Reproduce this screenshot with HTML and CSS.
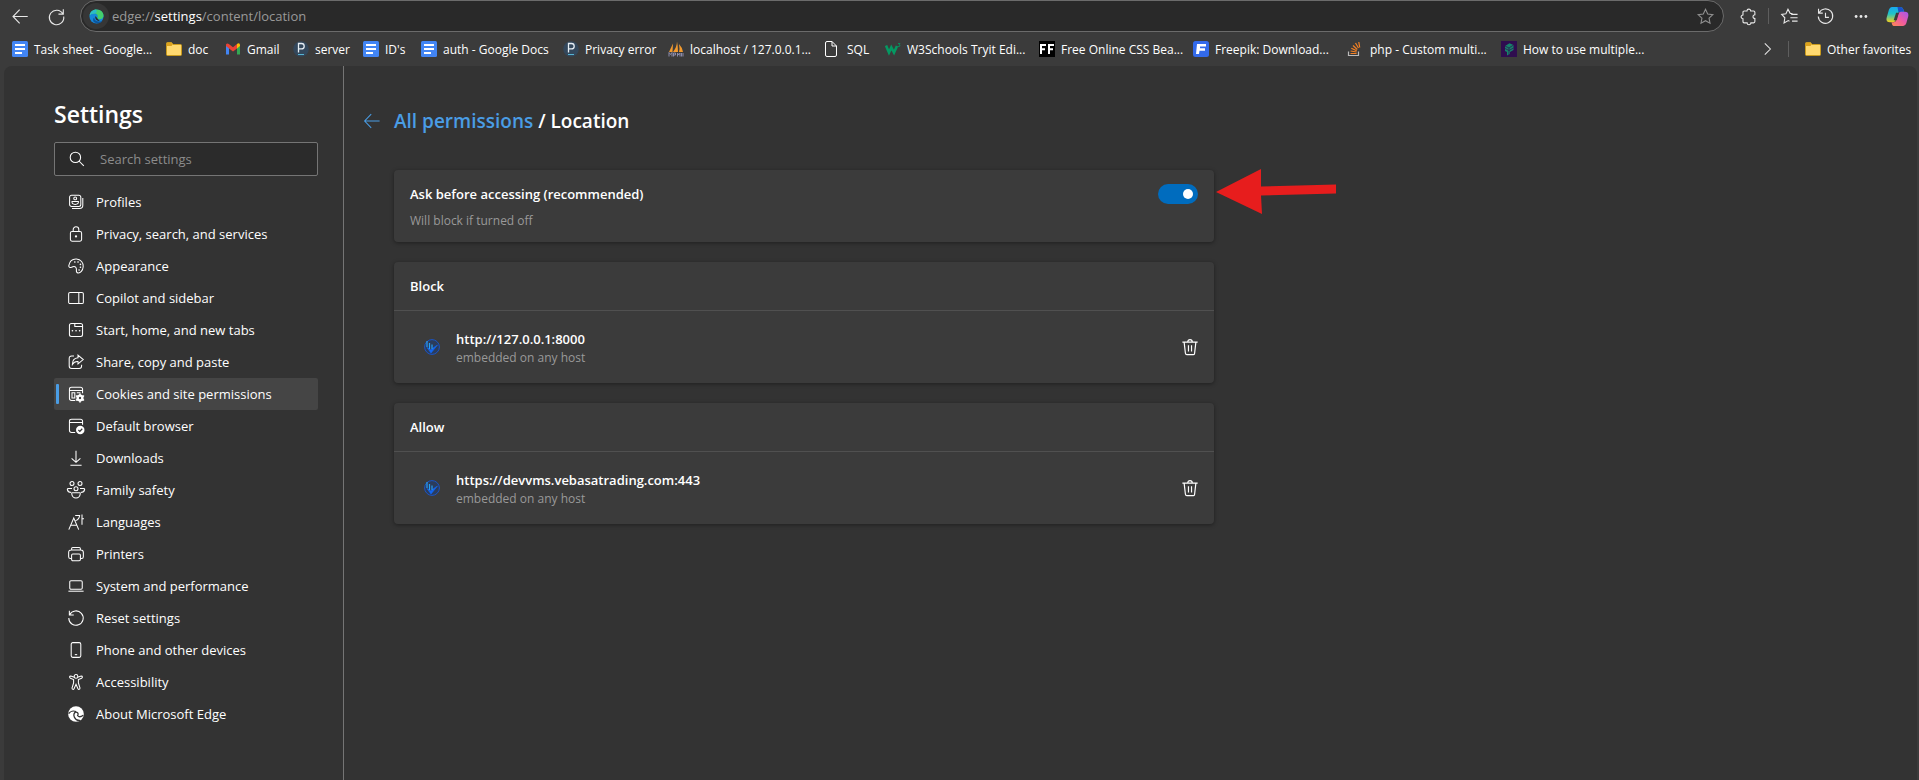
FILE: index.html
```
<!DOCTYPE html>
<html lang="en">
<head>
  <meta charset="utf-8">
  <title>Settings</title>
  <link rel="stylesheet" href="styles.css">
</head>
<body>
  <!-- shared icons -->
  <svg class="sprite" aria-hidden="true">
    <symbol id="docs" viewBox="0 0 16 16">
      <rect width="16" height="16" rx="1.5" fill="#4285f4"/>
      <path d="M3 4h10M3 8h10M3 12h7" stroke="#fff" stroke-width="2"/>
    </symbol>
    <symbol id="folder" viewBox="0 0 16 16">
      <path d="M.5 2.5q0-1 1-1h4l1.5 2h7.5q1 0 1 1v9q0 1-1 1h-13q-1 0-1-1z" fill="#ffd970" stroke="#c99a1c"/>
      <path d="M1 2h4.500l1.200 1.500L5.500 5H1z" fill="#dca11d"/>
    </symbol>
    <symbol id="pga" viewBox="0 0 16 16">
      <circle cx="8" cy="8" r="7.800" fill="#33475b"/>
      <path d="M5.500 11.500v-9h3a2.700 2.700 0 0 1 0 5.400h-3" fill="none" stroke="#e6edf3" stroke-width="1.300"/>
      <path d="M5 13.500h6" stroke="#56b4d3"/>
    </symbol>
    <symbol id="site" viewBox="0 0 16 16">
      <circle cx="8" cy="8" r="7.400" fill="#2b3c5c" stroke="#1c55c4"/>
      <path d="M3 8.500l4 5.500 6.500-8-4.500 3-2 2z" fill="#1266f1" stroke="#1266f1" stroke-width=".6"/>
      <path d="M3 2v6M5.500 4v6M8 5.500v4.500" stroke="#27a0f5" stroke-width="1.200"/>
    </symbol>
    <symbol id="trash" viewBox="0 0 20 20">
      <path d="M1.500 4.500h17M7.500 4.300a2.500 2.500 0 0 1 5 0M3.500 4.800l1.400 12.200q.2 1.500 1.600 1.500h7q1.400 0 1.600-1.500l1.400-12.200M8.300 8v7M11.700 8v7"/>
    </symbol>
  </svg>

  <header class="browser">
    <div class="toolbar">
      <button class="tool-btn" title="Back"><svg class="icon" viewBox="0 0 20 20"><path d="M18.500 10h-17M9 2l-7.800 8L9 18"/></svg></button>
      <button class="tool-btn" title="Refresh"><svg class="icon" viewBox="0 0 20 20"><path d="M17.500 7A8.500 8.500 0 1 0 18.500 10M18 1.500v5.700h-5.700"/></svg></button>
      <div class="address">
        <span class="edge-badge">
          <svg class="edge-logo" viewBox="0 0 16 16">
            <circle cx="8" cy="8" r="7.500" fill="#1687d9"/>
            <path d="M.7 7C1.200 3 4 .5 8 .5c4.500 0 7.500 3 7.500 6.500 0 2.500-1.700 4-4 4-2 0-3-.8-2.500-1.800C10 7 8.500 4.800 5.700 4.800 3.300 4.800 1.500 5.800.7 7z" fill="#43cf6d"/>
            <path d="M.7 7C1 3.500 3.500 1.200 7 .6c2 1.500 1.500 3.500-.5 4.200C3.800 4.500 1.700 5.500.7 7z" fill="#2bbcc8"/>
            <path d="M5.500 9c0 3 3 5 6.500 4.300l2.300-.9C12.500 15.500 8.500 16 6 14.500 3.800 13 4 10.300 5.500 9z" fill="#0b559e"/>
            <path d="M7 7.500q-1 2 .4 3.800 1.600 1.800 4 1.400L9 10z" fill="#292929"/>
          </svg>
        </span>
        <span class="url">edge://<b>settings</b>/content/location</span>
        <button class="tool-btn star" title="Add to favorites"><svg class="icon" viewBox="0 0 20 20"><path d="M10 1.500l2.600 5.500 6 .8-4.400 4.100 1.100 6L10 15l-5.300 2.900 1.100-6L1.400 7.800l6-.8z"/></svg></button>
      </div>
      <button class="tool-btn" title="Extensions"><svg class="icon" viewBox="0 0 20 20"><path d="M5 3.500h3.200a2.200 2.200 0 1 1 4.400 0H16q1.500 0 1.500 1.500v3a2.200 2.200 0 1 0 0 4.400V16q0 1.500-1.500 1.500h-3.200a2.200 2.200 0 0 1-4.400 0H5q-1.500 0-1.500-1.500v-3.400a2.200 2.200 0 1 1 0-4.400V5q0-1.500 1.500-1.500z"/></svg></button>
      <span class="separator"></span>
      <button class="tool-btn" title="Favorites"><svg class="icon" viewBox="0 0 20 20"><path d="M13.500 6.500l-2.700-.2L8.200 1.500 5.800 6.700.8 7.500l3.700 4-.9 6 4.900-2.700 1.500.8M12 7.500h7.500M11 11.500h8.500M13 15.500h6.500"/></svg></button>
      <button class="tool-btn" title="History"><svg class="icon" viewBox="0 0 20 20"><path d="M2.500 5.500A8.500 8.500 0 1 1 1.500 10M1.800 1v5h5M10 5.500V11h4"/></svg></button>
      <button class="tool-btn" title="More"><svg class="icon dots" viewBox="0 0 20 20"><circle cx="3" cy="10" r="2"/><circle cx="10" cy="10" r="2"/><circle cx="17" cy="10" r="2"/></svg></button>
      <button class="tool-btn copilot" title="Copilot">
        <svg viewBox="0 0 24 22">
          <defs>
            <linearGradient id="cool" x1="0" y1="0" x2="0" y2="1"><stop offset="0" stop-color="#18a8ef"/><stop offset=".45" stop-color="#20c3c8"/><stop offset="1" stop-color="#f3d01b"/></linearGradient>
            <linearGradient id="warm" x1="1" y1="0" x2="0" y2="1"><stop offset="0" stop-color="#a258f0"/><stop offset=".5" stop-color="#ef5aa2"/><stop offset="1" stop-color="#ff8b4d"/></linearGradient>
          </defs>
          <path d="M6 1h9q2.500 0 3.300 2.800L19 6h-4q-2 0-2.700 2l-2.300 7q-.6 2-2.600 2H4Q-1 17 1 11L3 4q1-3 3-3z" fill="url(#cool)"/>
          <path d="M12 1h3q2.500 0 3.300 2.800L19 6h-4l-2 .5z" fill="#1b50c8"/>
          <path d="M18 21H9q-2.500 0-3-3l-.3-1H8q2 0 2.600-2L13 8q.7-2 2.700-2h4q4.500 0 3.500 5l-2 7q-1 3-3.200 3z" fill="url(#warm)"/>
          <path d="M10.500 7h3l-2.300 8H8z" fill="#3b3b3b"/>
        </svg>
      </button>
    </div>

    <nav class="bookmarks" aria-label="Favorites bar">
      <a href="#"><svg><use href="#docs"/></svg>Task sheet - Google...</a>
      <a href="#"><svg><use href="#folder"/></svg>doc</a>
      <a href="#"><svg viewBox="0 0 16 16"><path d="M1 13.500V4l3 2.200v7.300z" fill="#4285f4"/><path d="M12 13.500V6.200L15 4v9.500z" fill="#34a853"/><path d="M1 5V3.500Q2 1.800 3.800 3L8 6.200 12 3v4.500l-4 3-4-3z" fill="#ea4335"/><path d="M12 3q2-1.500 3 .5V5l-3 2.500z" fill="#fbbc04"/></svg>Gmail</a>
      <a href="#"><svg><use href="#pga"/></svg>server</a>
      <a href="#"><svg><use href="#docs"/></svg>ID's</a>
      <a href="#"><svg><use href="#docs"/></svg>auth - Google Docs</a>
      <a href="#"><svg><use href="#pga"/></svg>Privacy error</a>
      <a href="#"><svg viewBox="0 0 16 16"><path d="M5 2.500L1 11h3.500zM9 .5Q9 6 5 11h5q0-6-1-10.500zM11 3q1 5 0 8h4q-1-5-4-8z" fill="#f29a2e"/><path d="M1 15.500v-4l1.500 2L4 11.500v4M5.500 15.500v-3.500h2v2h-2M9.500 15.500v-3.500l1.200 2 1.300-2v3.500M13.500 12v3.500M15 12v3.500" fill="none" stroke="#8c8cab"/></svg>localhost / 127.0.0.1...</a>
      <a href="#" class="wide"><svg viewBox="0 0 16 16"><path d="M2.500 2q0-1.500 1.500-1.500h5L13.500 5v9q0 1.500-1.500 1.500H4q-1.500 0-1.500-1.500zM9 .5V5h4.500" fill="none" stroke="#fff"/></svg>SQL</a>
      <a href="#"><svg viewBox="0 0 16 16"><path d="M1 4.500l3 7 2.300-5 2.700 5 3-6.500" fill="none" stroke="#059862" stroke-width="2.600"/><path d="M13 2.500h2l-1 1.300q1.500.2.900 1.300-.7.900-2 .3" fill="none" stroke="#059862" stroke-width=".8"/></svg>W3Schools Tryit Edi...</a>
      <a href="#"><svg viewBox="0 0 16 16"><path d="M0 0h16v16H0z"/><path d="M2 13V4h5M2 8.200h4M10 13V4h5M10 8.200h4" fill="none" stroke="#fff" stroke-width="2"/></svg>Free Online CSS Bea...</a>
      <a href="#"><svg viewBox="0 0 16 16"><rect width="16" height="16" rx="2.500" fill="#336aea"/><path d="M4 3h9v2.500H7v1.800h5v2.500H6.500L6 13H3z" fill="#fff"/></svg>Freepik: Download...</a>
      <a href="#" class="wide"><svg viewBox="0 0 16 16"><path d="M2.500 10.500v4h10v-4" fill="none" stroke="#bcbbbb" stroke-width="1.200"/><path d="M4.500 12.500h6M4.600 10l6 1M5.300 7.300l5.400 2.500M7 4.500l4.300 4M9.500 2l3 5M12.800 1l.9 5.500" stroke="#f48024" stroke-width="1.200"/></svg>php - Custom multi...</a>
      <a href="#"><svg viewBox="0 0 16 16"><path d="M0 0h16v16H0z" fill="#2f0d4f"/><path d="M4 5l4.500-2.800L12.500 4v5L9 11v2l-3 1.500V11l-2-1z" fill="#16836a"/><path d="M4 5l4 2 4.500-3M4 7.500l4 2L12.500 7M8 7v7" fill="none" stroke="#2f0d4f" stroke-width=".7"/></svg>How to use multiple...</a>
      <button class="tool-btn overflow" title="More favorites"><svg class="icon" viewBox="0 0 20 20"><path d="M6 3l7 7-7 7"/></svg></button>
      <span class="separator"></span>
      <a href="#"><svg><use href="#folder"/></svg>Other favorites</a>
    </nav>
  </header>

  <div class="page">
    <aside class="sidebar">
      <h1>Settings</h1>
      <label class="search">
        <svg class="icon" viewBox="0 0 20 20"><circle cx="8" cy="8" r="6.500"/><path d="M12.500 12.500l6 6"/></svg>
        <input type="search" placeholder="Search settings" aria-label="Search settings">
      </label>
      <nav class="menu">
        <a href="#"><svg class="icon" viewBox="0 0 20 20"><rect x="2" y="1.500" width="14" height="14" rx="2.500"/><circle cx="9" cy="5.500" r="1.800"/><path d="M5 9.500h8q.3 3.500-4 3.500T5 9.500zM18.500 5v9q0 4-4 4H5"/></svg>Profiles</a>
        <a href="#"><svg class="icon" viewBox="0 0 20 20"><rect x="3" y="7" width="14" height="12" rx="2"/><path d="M6.500 7V4.500a3.500 3.500 0 0 1 7 0V7"/><circle cx="10" cy="13" r=".8"/></svg>Privacy, search, and services</a>
        <a href="#"><svg class="icon" viewBox="0 0 20 20"><path d="M1 9.500C2 4 6 1 10.500 1.200 16 1.500 19.500 6 19 11c-.5 5-3.500 8-6.500 7.700-3-.5-1.800-3.500-2-5.200C10 11 8 10.200 6 11c-2.500 1.500-5.500 1-5-1.500z"/><path d="M8.500 5h.1M12.500 5h.1M15.500 8h.1M15.500 11.500h.1M13.800 15h.1" class="dab"/></svg>Appearance</a>
        <a href="#"><svg class="icon" viewBox="0 0 20 20"><rect x=".8" y="3" width="18.400" height="14" rx="1.800"/><path d="M13.500 3v14"/></svg>Copilot and sidebar</a>
        <a href="#"><svg class="icon" viewBox="0 0 20 20"><rect x="1.800" y="1.800" width="16.400" height="16.400" rx="2.500"/><path d="M8.500 2v3.500H18"/><path d="M5.500 11h.1M10 11h.1M14.500 11h.1" class="dab"/></svg>Start, home, and new tabs</a>
        <a href="#"><svg class="icon" viewBox="0 0 20 20"><path d="M7.500 2.500h-3q-3 0-3 3V15q0 3 3 3H14q3 0 3-3v-1.500"/><path d="M12.500 1.500L19 7l-6.500 5.500V9.500Q8 9 5.500 13 5.500 5.500 12.500 4.800z"/></svg>Share, copy and paste</a>
        <a href="#" class="active"><svg class="icon" viewBox="0 0 20 20"><path d="M9 18H4.500q-2.700 0-2.700-2.700V4Q1.800 1.500 4.500 1.500h11q2.700 0 2.700 2.500v5M2 5.500h16M5 8.500h3.500V15H5zM11 8.500h4.500"/><circle cx="15" cy="15" r="3" class="gear"/><path d="M15 10v2M15 18v2M10.700 12.500l1.700 1M17.600 16.500l1.700 1M10.700 17.500l1.700-1M17.600 13.500l1.700-1" class="dab"/></svg>Cookies and site permissions</a>
        <a href="#"><svg class="icon" viewBox="0 0 20 20"><path d="M9 18H4.500q-2.700 0-2.700-2.700V4Q1.800 1.500 4.500 1.500h11q2.700 0 2.700 2.500v4.500M2 5.500h16"/><circle cx="15.300" cy="15" r="5.300" class="solid"/><path d="M13 15l1.800 1.800 3-3.300" class="cut"/></svg>Default browser</a>
        <a href="#"><svg class="icon" viewBox="0 0 20 20"><path d="M10 1v14.500M4.500 10.500l5.500 5 5.500-5M3 19h14"/></svg>Downloads</a>
        <a href="#"><svg class="icon" viewBox="0 0 20 20"><circle cx="5" cy="2" r="2.500"/><circle cx="15" cy="2" r="2.500"/><circle cx="10" cy="8.500" r="2.500"/><path d="M4 13.200Q-.2 13-.8 9.500q0-1.500 1.500-1.500H5M16 13.200q4.200-.2 4.800-3.700 0-1.500-1.500-1.500H15M5.500 13.500h9q1 0 .8 1.500-.8 5-5.300 5t-5.300-5q-.2-1.500.8-1.500z"/></svg>Family safety</a>
        <a href="#"><svg class="icon" viewBox="0 0 20 20"><path d="M1 19.500L7.200 5l6.200 14.500M3.300 14h7.800M9 1.800h5.500q-.2 4.500-5 6.500M17.500.5v13M17.500 6h2.500"/></svg>Languages</a>
        <a href="#"><svg class="icon" viewBox="0 0 20 20"><path d="M4.500 15.500H3q-2.200 0-2.200-2.200V8Q.8 5 4 5h12q3.200 0 3.200 3v5.300q0 2.200-2.200 2.200h-1.500M4.500 5V3.500Q4.500 2 6 2h8q1.500 0 1.500 1.500V5"/><rect x="4.500" y="10" width="11" height="8.500" rx="1.500"/></svg>Printers</a>
        <a href="#"><svg class="icon" viewBox="0 0 20 20"><rect x="2.200" y="3.500" width="15.600" height="10.500" rx="1.500"/><path d="M.5 16.500h19"/></svg>System and performance</a>
        <a href="#"><svg class="icon" viewBox="0 0 20 20"><path d="M2 6A9 9 0 1 1 1 10M1.700.8v5.500h5.500"/></svg>Reset settings</a>
        <a href="#"><svg class="icon" viewBox="0 0 20 20"><rect x="4" y=".8" width="12" height="18.400" rx="2"/><path d="M8.500 15.800h3"/></svg>Phone and other devices</a>
        <a href="#"><svg class="icon" viewBox="0 0 20 20"><circle cx="10" cy="3" r="2.300"/><path d="M8 4.200L3.500 2.500q-1.500 0-1.500 1.200t1 1.500L7 7v4l-2 6.500q0 1.500 1 1.700t1.600-.8L10 13l2.400 5.400q.6 1 1.600.8t1-1.700L13 11V7l4-1.800q1-.3 1-1.500t-1.500-1.200L12 4.200"/></svg>Accessibility</a>
        <a href="#"><svg class="icon" viewBox="0 0 20 20"><circle cx="10" cy="10" r="9.800" class="solid"/><path d="M.8 9.500C3 6.500 7 5.500 10 7M10 7q-4 2.500-2 7t7 4M10 7.800q4 .8 2 4.200 2.500 3 7-.5" class="cut"/></svg>About Microsoft Edge</a>
      </nav>
    </aside>

    <main class="content">
      <div class="title-row">
        <a href="#" class="back" aria-label="Back to all permissions"><svg class="icon" viewBox="0 0 20 20"><path d="M19.500 10H.8M9 1.500L.8 10 9 18.500"/></svg></a>
        <h2><a href="#">All permissions</a> / Location</h2>
      </div>

      <section class="card ask">
        <div class="ask-text">
          <label for="ask">Ask before accessing (recommended)</label>
          <p>Will block if turned off</p>
        </div>
        <input type="checkbox" role="switch" class="toggle" id="ask" checked>
        <svg class="pointer" viewBox="0 0 122 48" aria-hidden="true"><path d="M2 24L47 1v17.500l75-2v9l-75 2L48 46z"/></svg>
      </section>

      <section class="card">
        <h3>Block</h3>
        <div class="site">
          <svg class="favicon"><use href="#site"/></svg>
          <div class="site-text">
            <strong>http://127.0.0.1:8000</strong>
            <span>embedded on any host</span>
          </div>
          <button class="remove" title="Remove"><svg class="icon"><use href="#trash"/></svg></button>
        </div>
      </section>

      <section class="card">
        <h3>Allow</h3>
        <div class="site">
          <svg class="favicon"><use href="#site"/></svg>
          <div class="site-text">
            <strong>https://devvms.vebasatrading.com:443</strong>
            <span>embedded on any host</span>
          </div>
          <button class="remove" title="Remove"><svg class="icon"><use href="#trash"/></svg></button>
        </div>
      </section>
    </main>
  </div>
</body>
</html>
```
FILE: styles.css
```
* {
  box-sizing: border-box;
}

body {
  margin: 0;
  min-height: 100vh;
  display: flex;
  flex-direction: column;
  background: #3b3b3b;
  color: #fff;
  font-family: "Segoe UI", "Open Sans", "Noto Sans", sans-serif;
  font-size: 13px;
}

a {
  color: inherit;
  text-decoration: none;
}

h1, h2, h3, p {
  margin: 0;
  font-weight: 600;
}

.sprite {
  display: none;
}

.icon {
  width: 16px;
  height: 16px;
  flex: none;
  fill: none;
  stroke: currentColor;
  stroke-width: 1.3;
  overflow: visible;
}

.icon .dab {
  stroke-width: 2;
  stroke-linecap: round;
}

.icon .gear {
  stroke-width: 3;
}

.icon .solid {
  fill: currentColor;
  stroke: none;
}

.icon .cut {
  stroke: #333;
  stroke-width: 1.6;
}

/* Browser chrome */
.toolbar {
  display: flex;
  align-items: center;
  height: 32px;
  padding: 0 4px 0 2px;
}

.tool-btn {
  width: 36px;
  height: 28px;
  padding: 0;
  display: flex;
  align-items: center;
  justify-content: center;
  flex: none;
  border: none;
  background: none;
  color: #e8e8e8;
  cursor: pointer;
}

.toolbar .icon {
  width: 17px;
  height: 17px;
}

.toolbar .dots {
  width: 14px;
  fill: currentColor;
  stroke: none;
}

.address {
  flex: 1;
  display: flex;
  align-items: center;
  height: 32px;
  margin: 0 6px;
  padding-left: 2px;
  border: 1px solid #6b6b6b;
  border-radius: 16px;
  background: #292929;
}

.edge-badge {
  width: 26px;
  height: 26px;
  display: flex;
  align-items: center;
  justify-content: center;
  border-radius: 50%;
  background: #363636;
}

.edge-logo {
  width: 15px;
  height: 15px;
}

.url {
  flex: 1;
  padding-left: 3px;
  color: #999;
}

.url b {
  color: #fff;
  font-weight: 400;
}

.star {
  color: #8f8f8f;
}

.separator {
  width: 1px;
  height: 16px;
  margin: 0 2px;
  background: #5e5e5e;
}

.copilot svg {
  width: 23px;
  height: 21px;
}

.bookmarks {
  display: grid;
  grid-template-columns: 154px 59px 68px 70px 58px 142px 105px 153px 64px 154px 154px 151px 157px 1fr 36px 19px 104px;
  align-items: center;
  height: 34px;
  padding: 0 10px 0 12px;
  font-size: 12px;
}

.bookmarks a {
  display: flex;
  align-items: center;
  gap: 6px;
  white-space: nowrap;
}

.bookmarks a svg {
  width: 16px;
  height: 16px;
  flex: none;
}

.bookmarks a.wide svg {
  width: 20px;
}

/* Settings page */
.page {
  flex: 1;
  display: flex;
  margin: 0 2px 0 4px;
  border-radius: 8px 8px 0 0;
  background: #333;
}

.sidebar {
  width: 340px;
  padding: 32px 25px 40px 50px;
  border-right: 1px solid #757575;
}

.sidebar h1 {
  font-size: 23px;
  line-height: 32px;
}

.search {
  display: flex;
  align-items: center;
  height: 34px;
  margin: 12px 0 10px;
  padding-left: 14px;
  border: 1px solid #757575;
  border-radius: 2px;
  background: #2b2b2b;
}

.search input {
  flex: 1;
  min-width: 0;
  margin-left: 15px;
  padding: 0;
  border: none;
  outline: none;
  background: none;
  color: #fff;
  font: inherit;
}

.search input::placeholder {
  color: #8c8c8c;
}

.menu a {
  display: flex;
  align-items: center;
  gap: 12px;
  height: 32px;
  padding-left: 14px;
  border-radius: 2px;
}

.menu a.active {
  padding-left: 2px;
  background: #454545;
}

.menu a.active::before {
  content: "";
  width: 3px;
  height: 20px;
  margin-right: -3px;
  border-radius: 1px;
  background: #4a9de5;
}

.content {
  flex: 1;
  padding: 40px 20px;
}

.title-row {
  display: flex;
  align-items: center;
  gap: 14px;
  height: 30px;
  margin-bottom: 34px;
}

.title-row h2 {
  font-size: 19px;
}

.title-row a {
  color: #4a9de5;
}

.back {
  display: flex;
}

.card {
  max-width: 820px;
  margin: 0 0 20px 30px;
  border-radius: 4px;
  background: #3b3b3b;
  box-shadow: 0 1px 4px rgba(0, 0, 0, 0.4);
}

.ask {
  position: relative;
  display: flex;
  align-items: flex-start;
  padding: 14px 16px 12px;
}

.ask-text {
  flex: 1;
}

.ask-text label {
  font-weight: 600;
  line-height: 20px;
}

.ask-text p,
.site-text span {
  color: #999;
  font-size: 12px;
  font-weight: 400;
}

.ask-text p {
  margin-top: 8px;
  line-height: 18px;
}

.toggle {
  appearance: none;
  width: 40px;
  height: 20px;
  margin: 0;
  padding: 5px;
  display: flex;
  border-radius: 10px;
  background: #757575;
}

.toggle::before {
  content: "";
  width: 10px;
  height: 10px;
  border-radius: 50%;
  background: #fff;
}

.toggle:checked {
  justify-content: flex-end;
  background: #006cbe;
}

/* red arrow pointing at the switch */
.pointer {
  position: absolute;
  left: 100%;
  top: -2px;
  width: 122px;
  height: 48px;
  fill: #e71d1d;
}

.card h3 {
  padding: 14px 16px;
  border-bottom: 1px solid #505050;
  font-size: 13px;
  line-height: 20px;
}

.site {
  display: flex;
  align-items: center;
  height: 72px;
  padding: 0 14px 0 30px;
}

.favicon {
  width: 16px;
  height: 16px;
}

.site-text {
  flex: 1;
  display: flex;
  flex-direction: column;
  margin-left: 16px;
  padding-top: 2px;
}

.site-text strong {
  font-weight: 600;
  line-height: 20px;
}

.site-text span {
  line-height: 18px;
}

.remove {
  width: 20px;
  height: 24px;
  padding: 0;
  display: flex;
  align-items: center;
  justify-content: center;
  border: none;
  background: none;
  color: #fff;
  cursor: pointer;
}

.remove .icon {
  width: 18px;
  height: 18px;
}
```
